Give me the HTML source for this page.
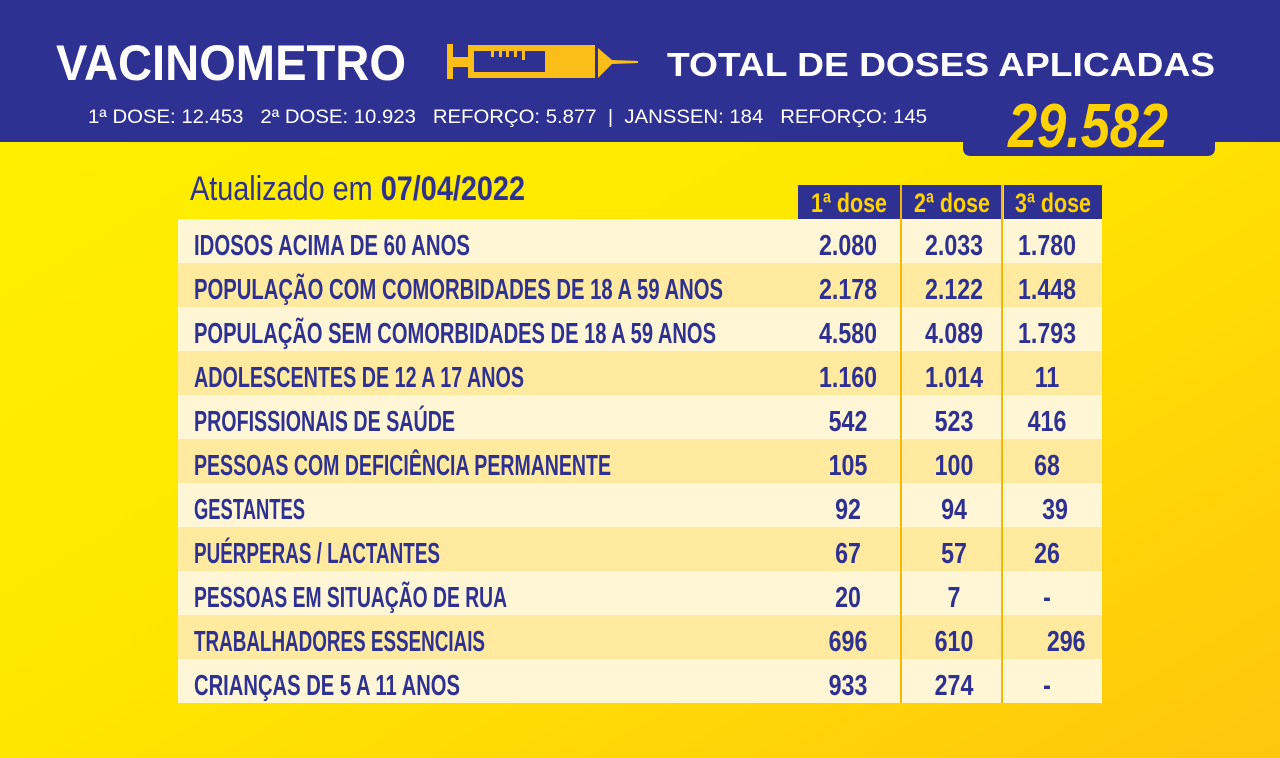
<!DOCTYPE html>
<html><head><meta charset="utf-8"><style>
html,body{margin:0;padding:0;width:1280px;height:758px;overflow:hidden}
svg{display:block}
</style></head><body>
<svg width="1280" height="758" viewBox="0 0 1280 758" xmlns="http://www.w3.org/2000/svg" font-family="Liberation Sans, sans-serif">
<defs>
<linearGradient id="bg" x1="0" y1="0" x2="1" y2="1">
<stop offset="0" stop-color="#fff200"/><stop offset="0.5" stop-color="#ffe600"/><stop offset="1" stop-color="#ffc60e"/>
</linearGradient>
</defs>
<rect width="1280" height="758" fill="url(#bg)"/>
<rect width="1280" height="142" fill="#2e3192"/>
<path d="M963 140 H1215 V148 Q1215 156 1207 156 H971 Q963 156 963 148 Z" fill="#2e3192"/>
<text x="56" y="80" font-size="50" font-weight="bold" fill="#fff" textLength="350" lengthAdjust="spacingAndGlyphs">VACINOMETRO</text>
<g fill="#fbbd17">
<rect x="447" y="44" width="6" height="35"/>
<rect x="453" y="57" width="15" height="10"/>
<rect x="468" y="45" width="127" height="33"/>
<path d="M598 48 L612 60 L638 61 L638 63 L612 64 L598 78 Z"/>
</g>
<rect x="474" y="51" width="71" height="21" fill="#2e3192"/>
<g fill="#fbbd17"><rect x="491" y="51" width="3" height="6"/><rect x="499" y="51" width="3" height="6"/><rect x="506" y="51" width="3" height="6"/><rect x="514" y="51" width="3" height="6"/><rect x="522" y="51" width="3" height="9"/></g>
<text x="667" y="76" font-size="33" font-weight="bold" fill="#fff" textLength="548" lengthAdjust="spacingAndGlyphs">TOTAL DE DOSES APLICADAS</text>
<text x="88" y="123" font-size="19" fill="#fff" textLength="839" lengthAdjust="spacingAndGlyphs" xml:space="preserve">1ª DOSE: 12.453   2ª DOSE: 10.923   REFORÇO: 5.877  |  JANSSEN: 184   REFORÇO: 145</text>
<text x="1008" y="147" font-size="62" font-weight="bold" font-style="italic" fill="#ffd200" textLength="160" lengthAdjust="spacingAndGlyphs">29.582</text>
<text x="190" y="200" font-size="34" fill="#2e3192" textLength="335" lengthAdjust="spacingAndGlyphs">Atualizado em <tspan font-weight="bold">07/04/2022</tspan></text>
<g fill="#2e3192"><rect x="798" y="185" width="102" height="34"/><rect x="902" y="185" width="100" height="34"/><rect x="1004" y="185" width="98" height="34"/></g>
<g fill="#ffd200" font-size="27" font-weight="bold" text-anchor="middle">
<text x="849" y="212" textLength="76" lengthAdjust="spacingAndGlyphs">1ª dose</text>
<text x="952" y="212" textLength="76" lengthAdjust="spacingAndGlyphs">2ª dose</text>
<text x="1053" y="212" textLength="76" lengthAdjust="spacingAndGlyphs">3ª dose</text>
</g>
<g>
<rect x="178" y="219" width="924" height="44" fill="#fff6d6"/>
<rect x="178" y="263" width="924" height="44" fill="#ffeaa0"/>
<rect x="178" y="307" width="924" height="44" fill="#fff6d6"/>
<rect x="178" y="351" width="924" height="44" fill="#ffeaa0"/>
<rect x="178" y="395" width="924" height="44" fill="#fff6d6"/>
<rect x="178" y="439" width="924" height="44" fill="#ffeaa0"/>
<rect x="178" y="483" width="924" height="44" fill="#fff6d6"/>
<rect x="178" y="527" width="924" height="44" fill="#ffeaa0"/>
<rect x="178" y="571" width="924" height="44" fill="#fff6d6"/>
<rect x="178" y="615" width="924" height="44" fill="#ffeaa0"/>
<rect x="178" y="659" width="924" height="44" fill="#fff6d6"/>
</g>
<rect x="900" y="185" width="2" height="518" fill="#f5b800"/>
<rect x="1001" y="185" width="2" height="518" fill="#f5b800"/>
<g fill="#2e3192" font-size="29" font-weight="bold">
<text x="194" y="255" textLength="276" lengthAdjust="spacingAndGlyphs">IDOSOS ACIMA DE 60 ANOS</text>
<text x="194" y="299" textLength="529" lengthAdjust="spacingAndGlyphs">POPULAÇÃO COM COMORBIDADES DE 18 A 59 ANOS</text>
<text x="194" y="343" textLength="522" lengthAdjust="spacingAndGlyphs">POPULAÇÃO SEM COMORBIDADES DE 18 A 59 ANOS</text>
<text x="194" y="387" textLength="330" lengthAdjust="spacingAndGlyphs">ADOLESCENTES DE 12 A 17 ANOS</text>
<text x="194" y="431" textLength="261" lengthAdjust="spacingAndGlyphs">PROFISSIONAIS DE SAÚDE</text>
<text x="194" y="475" textLength="417" lengthAdjust="spacingAndGlyphs">PESSOAS COM DEFICIÊNCIA PERMANENTE</text>
<text x="194" y="519" textLength="111" lengthAdjust="spacingAndGlyphs">GESTANTES</text>
<text x="194" y="563" textLength="246" lengthAdjust="spacingAndGlyphs">PUÉRPERAS / LACTANTES</text>
<text x="194" y="607" textLength="313" lengthAdjust="spacingAndGlyphs">PESSOAS EM SITUAÇÃO DE RUA</text>
<text x="194" y="651" textLength="291" lengthAdjust="spacingAndGlyphs">TRABALHADORES ESSENCIAIS</text>
<text x="194" y="695" textLength="266" lengthAdjust="spacingAndGlyphs">CRIANÇAS DE 5 A 11 ANOS</text>
</g>
<g fill="#2e3192" font-size="29" font-weight="bold" text-anchor="middle">
<g transform="translate(848,0) scale(0.8,1)">
<text x="0" y="255">2.080</text><text x="0" y="299">2.178</text><text x="0" y="343">4.580</text><text x="0" y="387">1.160</text><text x="0" y="431">542</text><text x="0" y="475">105</text><text x="0" y="519">92</text><text x="0" y="563">67</text><text x="0" y="607">20</text><text x="0" y="651">696</text><text x="0" y="695">933</text>
</g>
<g transform="translate(954,0) scale(0.8,1)">
<text x="0" y="255">2.033</text><text x="0" y="299">2.122</text><text x="0" y="343">4.089</text><text x="0" y="387">1.014</text><text x="0" y="431">523</text><text x="0" y="475">100</text><text x="0" y="519">94</text><text x="0" y="563">57</text><text x="0" y="607">7</text><text x="0" y="651">610</text><text x="0" y="695">274</text>
</g>
<g transform="translate(1047,0) scale(0.8,1)">
<text x="0" y="255">1.780</text><text x="0" y="299">1.448</text><text x="0" y="343">1.793</text><text x="0" y="387">11</text><text x="0" y="431">416</text><text x="0" y="475">68</text><text x="10" y="519">39</text><text x="0" y="563">26</text><text x="0" y="607">-</text><text x="24" y="651">296</text><text x="0" y="695">-</text>
</g>
</g>
</svg>
</body></html>
